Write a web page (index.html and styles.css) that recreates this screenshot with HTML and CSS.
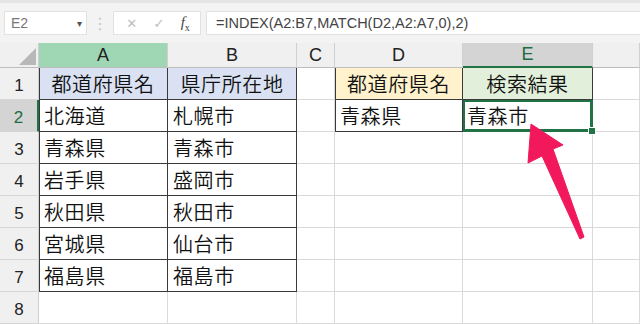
FILE: index.html
```html
<!DOCTYPE html>
<html>
<head>
    <title>INDEX MATCH</title>
    <link rel="stylesheet" href="styles.css">
</head>
<body>
    <div class="page">
        <!-- formula bar -->
        <div class="toolbar">
            <div class="name-box">
                <span>E2</span>
                <span class="caret">&#9662;</span>
            </div>
            <div class="dots">&#8942;</div>
            <div class="fn-box">
                <span class="fn-btn">&#10005;</span>
                <span class="fn-btn">&#10003;</span>
                <span class="fn-btn fx"><i>f</i><sub>x</sub></span>
            </div>
            <div class="formula">=INDEX(A2:B7,MATCH(D2,A2:A7,0),2)</div>
        </div>

        <!-- sheet -->
        <div class="sheet">
            <div class="corner">
                <svg width="39" height="25" viewBox="0 0 39 25"><polygon points="36,5 36,22 19,22" fill="#b8b8b8"/></svg>
            </div>
            <div class="col-head col-a">A</div>
            <div class="col-head">B</div>
            <div class="col-head">C</div>
            <div class="col-head">D</div>
            <div class="col-head col-sel">E</div>
            <div class="col-head"></div>

            <div class="row-head">1</div>
            <div class="cell tb head-blue edge-left center">都道府県名</div>
            <div class="cell tb head-blue center">県庁所在地</div>
            <div class="cell"></div>
            <div class="cell tb head-yellow edge-left center">都道府県名</div>
            <div class="cell tb head-green center">検索結果</div>
            <div class="cell"></div>

            <div class="row-head row-sel">2</div>
            <div class="cell tb edge-left">北海道</div>
            <div class="cell tb">札幌市</div>
            <div class="cell"></div>
            <div class="cell tb edge-left">青森県</div>
            <div class="cell tb selected">青森市<span class="handle"></span></div>
            <div class="cell"></div>

            <div class="row-head">3</div>
            <div class="cell tb edge-left">青森県</div>
            <div class="cell tb">青森市</div>
            <div class="cell"></div>
            <div class="cell"></div>
            <div class="cell"></div>
            <div class="cell"></div>

            <div class="row-head">4</div>
            <div class="cell tb edge-left">岩手県</div>
            <div class="cell tb">盛岡市</div>
            <div class="cell"></div>
            <div class="cell"></div>
            <div class="cell"></div>
            <div class="cell"></div>

            <div class="row-head">5</div>
            <div class="cell tb edge-left">秋田県</div>
            <div class="cell tb">秋田市</div>
            <div class="cell"></div>
            <div class="cell"></div>
            <div class="cell"></div>
            <div class="cell"></div>

            <div class="row-head">6</div>
            <div class="cell tb edge-left">宮城県</div>
            <div class="cell tb">仙台市</div>
            <div class="cell"></div>
            <div class="cell"></div>
            <div class="cell"></div>
            <div class="cell"></div>

            <div class="row-head">7</div>
            <div class="cell tb edge-left">福島県</div>
            <div class="cell tb">福島市</div>
            <div class="cell"></div>
            <div class="cell"></div>
            <div class="cell"></div>
            <div class="cell"></div>

            <div class="row-head">8</div>
            <div class="cell"></div>
            <div class="cell"></div>
            <div class="cell"></div>
            <div class="cell"></div>
            <div class="cell"></div>
            <div class="cell"></div>
        </div>

        <!-- pointer arrow laid over the sheet -->
        <svg class="arrow" width="640" height="324" viewBox="0 0 640 324">
            <polygon points="531,124 563,145 553,149 584,237 580,239 542,156 528,163" fill="#f2185c" stroke="#f2185c" stroke-width="1" stroke-linejoin="round"/>
        </svg>
    </div>
</body>
</html>
```

FILE: styles.css
```css
body {
    margin: 0;
    overflow: hidden;
    background: #fff;
}

.page {
    position: relative;
    width: 640px;
    height: 324px;
    overflow: hidden;
}

.toolbar {
    height: 43px;
    box-sizing: border-box;
    padding: 8px 0 8px 4px;
    display: flex;
    align-items: stretch;
    background: #f3f3f3;
    border-top: 3px solid #e4e4e4;
}

.name-box {
    width: 83px;
    box-sizing: border-box;
    background: #fff;
    border: 1px solid #e2e2e2;
    display: flex;
    align-items: center;
    justify-content: space-between;
    padding: 0 4px 0 6px;
    font-family: "Liberation Sans", Arial, sans-serif;
    font-size: 14px;
    color: #777;
}

.caret {
    font-size: 10px;
    color: #555;
}

.dots {
    width: 26px;
    display: flex;
    align-items: center;
    justify-content: center;
    color: #c4c4c4;
    font-size: 16px;
    font-family: "DejaVu Sans", sans-serif;
}

.fn-box {
    width: 88px;
    box-sizing: border-box;
    background: #fff;
    border: 1px solid #e2e2e2;
    display: flex;
    align-items: center;
    justify-content: space-around;
    padding: 0 2px 0 4px;
    font-family: "DejaVu Sans", sans-serif;
}

.fn-btn {
    color: #bdbdbd;
    font-size: 13px;
}

.fx {
    color: #444;
    font-family: "Liberation Serif", serif;
    font-size: 15px;
}

.fx sub {
    font-size: 10px;
}

.formula {
    flex: 1;
    margin-left: 5px;
    background: #fff;
    border: 1px solid #e2e2e2;
    border-right: none;
    display: flex;
    align-items: center;
    padding-left: 9px;
    font-family: "Liberation Sans", Arial, sans-serif;
    font-size: 14.5px;
    color: #444;
    white-space: nowrap;
}

.sheet {
    display: grid;
    grid-template-columns: 39px 129px 129px 38px 128px 130px 1fr;
    grid-template-rows: 25px repeat(8, 32px);
    font-family: "Noto Sans CJK JP", sans-serif;
}

.corner {
    background: #f0f0f0;
    border-right: 1px solid #cfcfcf;
    border-bottom: 1px solid #bdbdbd;
    box-sizing: border-box;
    line-height: 0;
}

.col-head {
    background: #f0f0f0;
    border-right: 1px solid #d0d0d0;
    border-bottom: 1px solid #bdbdbd;
    box-sizing: border-box;
    display: flex;
    align-items: flex-end;
    justify-content: center;
    padding-bottom: 1px;
    font-family: "Liberation Sans", Arial, sans-serif;
    font-size: 18px;
    color: #222;
}

.col-a {
    background: #9fd6b4;
}

.col-sel {
    background: #d4d4d4;
    color: #1f6b42;
    border-bottom: 2px solid #217346;
}

.row-head {
    background: #f0f0f0;
    border-right: 1px solid #cfcfcf;
    border-bottom: 1px solid #d6d6d6;
    box-sizing: border-box;
    display: flex;
    align-items: flex-end;
    justify-content: center;
    padding-bottom: 3px;
    font-family: "Liberation Sans", Arial, sans-serif;
    font-size: 17px;
    color: #222;
}

.row-sel {
    background: #d4d4d4;
    color: #1f6b42;
    border-right: 2px solid #217346;
}

.cell {
    border-right: 1px solid #d9d9d9;
    border-bottom: 1px solid #d9d9d9;
    box-sizing: border-box;
    display: flex;
    align-items: flex-end;
    padding: 0 0 1px 5px;
    font-size: 20px;
    font-weight: 350;
    letter-spacing: 0.6px;
    color: #111;
    white-space: nowrap;
}

.center {
    justify-content: center;
    padding-left: 0;
}

.tb {
    border-right-color: #3a3a3a;
    border-bottom-color: #3a3a3a;
}

.edge-left {
    box-shadow: inset 1px 0 0 #3a3a3a;
}

.head-blue {
    background: #d9e1f2;
}

.head-yellow {
    background: #fff2cc;
}

.head-green {
    background: #e2efda;
}

.selected {
    position: relative;
    box-shadow: inset 0 0 0 2px #217346;
    border-color: #217346;
    padding-left: 4px;
}

.handle {
    position: absolute;
    right: -4px;
    bottom: -4px;
    width: 6px;
    height: 6px;
    background: #217346;
    border: 1px solid #fff;
}

.arrow {
    position: absolute;
    left: 0;
    top: 0;
    pointer-events: none;
}
```
